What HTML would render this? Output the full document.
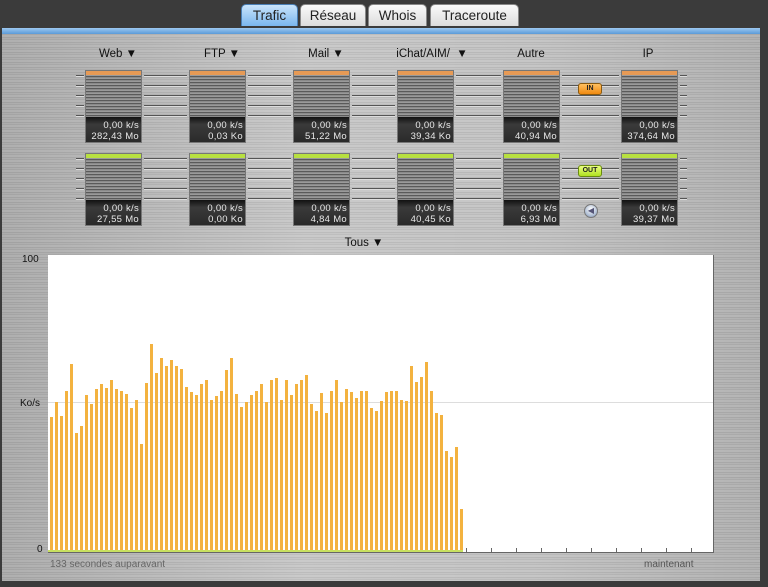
<!DOCTYPE html>
<html><head><meta charset="utf-8"><style>
*{margin:0;padding:0;box-sizing:border-box}
body{width:768px;height:587px;background:#3b3b3b;position:relative;overflow:hidden;font-family:"Liberation Sans",sans-serif}
.abs{position:absolute}
#panel{left:2px;top:33px;width:758px;height:548px;background:repeating-linear-gradient(180deg,#c0c0c0 0 1px,#b6b6b6 1px 2px,#c3c3c3 2px 4px,#b3b3b3 4px 5px);}
#panel:before{content:"";position:absolute;inset:0;background:linear-gradient(90deg,rgba(0,0,0,.1),rgba(255,255,255,.12) 40%,rgba(255,255,255,.05) 70%,rgba(0,0,0,.08))}
#strip{left:2px;top:28px;width:758px;height:6px;background:linear-gradient(#9cc8f0,#5a9ad8)}
.tab{top:4px;height:22px;border-radius:5px 5px 0 0;background:linear-gradient(#fafafa,#dcdcdc);border:1px solid #888;border-bottom:none;font-size:13.5px;color:#222;text-align:center;line-height:22px}
.tab.on{background:linear-gradient(#c9e4fb,#7ab6ee);border-color:#4a7fb5}
.lbl{font-size:11.5px;color:#111;text-align:center;width:100px}
.g{width:57px;height:73px;border:1px solid #777;background:#222}
.g .s{position:absolute;left:0;top:4px;width:55px;height:42px;background:repeating-linear-gradient(180deg,#9a9a9a 0 1px,#5a5a5a 1px 2px,#8a8a8a 2px 3px)}
.g .c{position:absolute;left:0;top:0;width:55px;height:4px}
.g .d{position:absolute;left:0;top:46px;width:55px;height:25px;background:linear-gradient(#111,#3a3a3a 30%,#2a2a2a);color:#e8e8e8;font-size:9.5px;text-align:right;padding-right:2px;line-height:11px;padding-top:3px;letter-spacing:.3px}
.ln{height:1px;background:#555;box-shadow:0 1px 0 #ddd}
#chart{left:48px;top:255px;width:666px;height:298px;background:#fff;border-right:1px solid #666;border-bottom:1px solid #666}
.bar{position:absolute;bottom:0;width:3.4px;background:#f3b23f}
.tk{position:absolute;bottom:0;width:1px;height:4px;background:#666}
.y{font-size:10px;color:#111}
</style></head><body>
<div id="panel" class="abs"></div>
<div id="strip" class="abs"></div>
<div class="abs tab on" style="left:241px;width:57px">Trafic</div>
<div class="abs tab" style="left:300px;width:66px">Réseau</div>
<div class="abs tab" style="left:368px;width:59px">Whois</div>
<div class="abs tab" style="left:430px;width:89px">Traceroute</div>

<div class="abs lbl" style="left:68px;top:48px">Web ▼</div>
<div class="abs lbl" style="left:172px;top:48px">FTP ▼</div>
<div class="abs lbl" style="left:276px;top:48px">Mail ▼</div>
<div class="abs lbl" style="left:382px;top:48px">iChat/AIM/ &nbsp;▼</div>
<div class="abs lbl" style="left:481px;top:48px">Autre</div>
<div class="abs lbl" style="left:598px;top:48px">IP</div>
<div id="gauges"></div>

<div class="abs" style="left:578px;top:83px;width:24px;height:12px;border-radius:3px;background:linear-gradient(#ffc060,#f08a10);border:1px solid #8a5a10;font-size:7px;font-weight:bold;text-align:center;line-height:10px;color:#222">IN</div>
<div class="abs" style="left:578px;top:165px;width:24px;height:12px;border-radius:3px;background:linear-gradient(#eaff80,#b0e020);border:1px solid #6a8a10;font-size:7px;font-weight:bold;text-align:center;line-height:10px;color:#222">OUT</div>
<div class="abs" style="left:584px;top:204px;width:14px;height:14px;border-radius:50%;background:radial-gradient(circle at 50% 35%,#fff,#a8b8d0 70%,#778);border:1px solid #777;font-size:8px;line-height:12px;text-align:center;color:#557">◀</div>

<div class="abs lbl" style="left:314px;top:237px">Tous ▼</div>
<div class="abs y" style="left:22px;top:254px">100</div>
<div class="abs y" style="left:20px;top:398px">Ko/s</div>
<div class="abs y" style="left:37px;top:544px">0</div>
<div id="chart" class="abs">
<div class="abs" style="left:0;top:147px;width:665px;height:1px;background:#ddd"></div>
</div>
<div class="abs" style="left:50px;top:559px;font-size:10px;color:#666">133 secondes auparavant</div>
<div class="abs" style="left:644px;top:559px;font-size:10px;color:#555">maintenant</div>
<script>
var G=document.getElementById('gauges'),h='';
var xs=[85,189,293,397,503,621];
var top1=["282,43 Mo","0,03 Ko","51,22 Mo","39,34 Ko","40,94 Mo","374,64 Mo"];
var bot=["27,55 Mo","0,00 Ko","4,84 Mo","40,45 Ko","6,93 Mo","39,37 Mo"];
[[70,'#e79a55',top1],[153,'#b8e040',bot]].forEach(function(r){
 var y=r[0];
 for(var k=0;k<5;k++){var ly=y+5+k*10;
  h+='<div class="abs ln" style="left:76px;top:'+ly+'px;width:8px"></div>';
  for(var i=0;i<5;i++){var a=xs[i]+59,b=xs[i+1]-2;h+='<div class="abs ln" style="left:'+a+'px;top:'+ly+'px;width:'+(b-a)+'px"></div>';}
  h+='<div class="abs ln" style="left:680px;top:'+ly+'px;width:7px"></div>';}
 xs.forEach(function(x,i){h+='<div class="abs g" style="left:'+x+'px;top:'+y+'px"><div class="c" style="background:'+r[1]+'"></div><div class="s"></div><div class="d">0,00 k/s<br>'+r[2][i]+'</div></div>';});
});
G.innerHTML=h;
var z=[262,215,257,182,102,310,289,196,222,176,162,175,150,176,183,192,235,211,342,159,42,128,85,107,89,108,117,172,186,196,162,150,210,197,183,121,83,191,232,216,196,183,162,216,150,143,210,150,195,162,150,136,221,242,189,249,183,150,216,176,186,205,182,182,235,242,213,186,183,183,210,214,109,156,142,96,183,249,256,362,382,351,538];
var c=document.getElementById('chart'),s='';
z.forEach(function(v,i){var t=330+v/3;s+='<div class="bar" style="left:'+(1.5+i*5)+'px;height:'+(552-t)+'px"></div>';});
s+='<div class="abs" style="left:0;bottom:0;width:415px;height:2px;background:#c8e060"></div>';
for(var i=0;i<10;i++)s+='<div class="tk" style="left:'+(418+i*25)+'px"></div>';
c.innerHTML+=s;
</script>
</body></html>
